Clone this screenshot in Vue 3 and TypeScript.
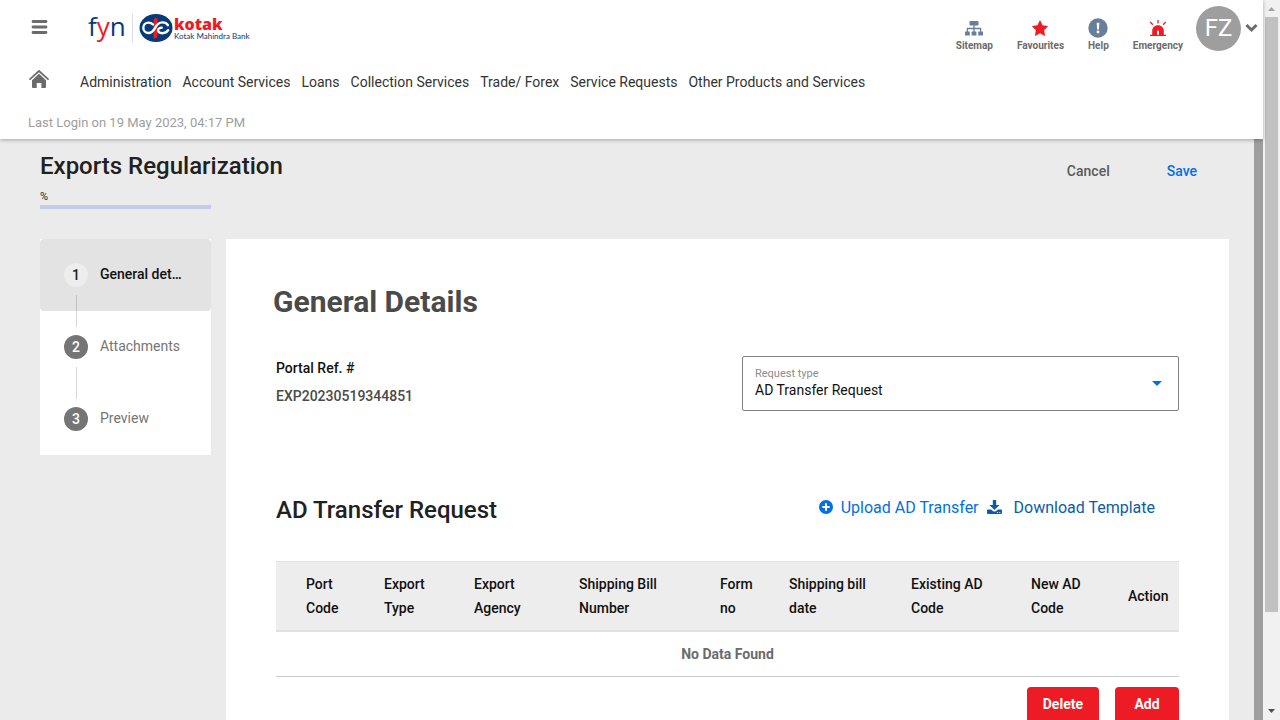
<script setup lang="ts">
import { ref } from 'vue'

interface Step {
  id: number
  label: string
}
interface Column {
  label: string
  width: number
}

const menu: string[] = [
  'Administration',
  'Account Services',
  'Loans',
  'Collection Services',
  'Trade/ Forex',
  'Service Requests',
  'Other Products and Services',
]
const steps: Step[] = [
  { id: 1, label: 'General details' },
  { id: 2, label: 'Attachments' },
  { id: 3, label: 'Preview' },
]
const columns: Column[] = [
  { label: 'Port Code', width: 98 },
  { label: 'Export Type', width: 90 },
  { label: 'Export Agency', width: 105 },
  { label: 'Shipping Bill Number', width: 141 },
  { label: 'Form no', width: 69 },
  { label: 'Shipping bill date', width: 122 },
  { label: 'Existing AD Code', width: 120 },
  { label: 'New AD Code', width: 97 },
  { label: 'Action', width: 61 },
]
const activeStep = ref(1)
const requestType = ref('AD Transfer Request')
</script>

<template>
  <div class="screen">
    <div class="app">
      <header class="header">
        <div class="topbar">
          <button class="plain burger" type="button" aria-label="Menu">
            <svg width="17" height="16" viewBox="0 0 17 16"><path d="M2 2.5h13M2 8h13M2 13.5h13" stroke="#6b6b6b" stroke-width="2.8" stroke-linecap="round" /></svg>
          </button>
          <a class="logo" href="#" aria-label="fyn Kotak Mahindra Bank">
            <span class="fyn">f<span class="red">y</span>n</span>
            <svg width="34" height="28" viewBox="0 0 34 28">
              <ellipse cx="17" cy="14" rx="16.500" ry="14" fill="#073a7a" />
              <path d="M18.500 4h-1.500q-2.500.3-2.500 3.200V24.500h1.500q2.500-.3 2.500-3.200z" fill="#ed1c24" />
              <path d="M14 10.500C12.800 9.200 11.200 8.600 9.500 8.600c-3 0-5.200 2.300-5.200 5.200s2.300 5.200 5.200 5.200c3.300 0 4.900-2.200 6.600-5.200 1.700-3.100 3.700-5.400 7.200-5.400 2.500 0 4.600 1 5.600 2.800M29.200 16.200c-1.100 1.900-3.300 3-5.800 3-2.600 0-4.300-1.100-4.300-2.900 0-1.700 1.500-2.600 3.600-2.500" fill="none" stroke="#fff" stroke-width="2.400" stroke-linecap="round" />
            </svg>
            <span class="wordmark">
              <span class="kotak">kotak</span>
              <span class="bank">Kotak Mahindra Bank</span>
            </span>
          </a>
          <nav class="tools" aria-label="Quick links">
            <a href="#" class="tool">
              <svg width="20" height="20" viewBox="0 0 20 20" fill="#687f99"><rect x="5.500" y="3" width="9" height="4.500" rx=".7" /><rect x="1" y="13.500" width="4.800" height="4" rx=".6" /><rect x="7.600" y="13.500" width="4.800" height="4" rx=".6" /><rect x="14.200" y="13.500" width="4.800" height="4" rx=".6" /><path d="M3.400 14v-3.500h13.200V14M10 7v7" fill="none" stroke="#687f99" stroke-width="1.300" /></svg>
              <span>Sitemap</span>
            </a>
            <a href="#" class="tool">
              <svg width="20" height="20" viewBox="0 0 20 20"><path d="M10 2.500l2.400 5 5.400.8-3.900 3.900.9 5.500-4.800-2.600-4.800 2.600.9-5.500-3.900-3.900 5.400-.8z" fill="#ed1c24" stroke="#ed1c24" stroke-linejoin="round" stroke-width=".5" /></svg>
              <span>Favourites</span>
            </a>
            <a href="#" class="tool">
              <svg width="20" height="20" viewBox="0 0 20 20"><circle cx="10" cy="10" r="9.700" fill="#687f99" /><path d="M8.700 4.800h2.600l-.4 6.800H9.100z" fill="#fff" /><circle cx="10" cy="14" r="1.400" fill="#fff" /></svg>
              <span>Help</span>
            </a>
            <a href="#" class="tool">
              <svg width="20" height="20" viewBox="0 0 20 20"><path d="M2 18v-1.300h2.200V13c0-3.300 2.300-5.800 5.800-5.800s5.800 2.500 5.800 5.800v3.700H18V18zM9 16.700h2v-3.200a1 1 0 0 0-2 0z" fill="#ed1c24" fill-rule="evenodd" /><path d="M10 2v3.500M2.300 4l2.500 2.700M17.700 4l-2.500 2.700" stroke="#ed1c24" stroke-width="1.300" /></svg>
              <span>Emergency</span>
            </a>
          </nav>
          <button class="plain profile" type="button" aria-label="Profile">
            <span class="avatar">FZ</span>
            <svg width="13" height="11" viewBox="0 0 13 11"><path d="M1.500 2l5 5 5-5" fill="none" stroke="#6b6b6b" stroke-width="3" /></svg>
          </button>
        </div>
        <nav class="menubar" aria-label="Main">
          <a href="#" class="home" aria-label="Home">
            <svg width="20" height="20" viewBox="0 0 20 20" fill="#6b6b6b"><path d="M1 10.200l9-8.200 9 8.200" fill="none" stroke="#6b6b6b" stroke-width="1.700" stroke-linecap="round" /><path d="M3 11.200l7-6.400 7 6.400V18q0 1-1 1h-3.600v-5H7.700v5H4q-1 0-1-1z" /></svg>
          </a>
          <a v-for="item in menu" :key="item" href="#">{{ item }}</a>
        </nav>
        <p class="login">Last Login on 19 May 2023, 04:17 PM</p>
      </header>

      <div class="workspace">
        <div class="content">
          <div class="titlebar">
            <div>
              <h1>Exports Regularization</h1>
              <p class="percent">%</p>
              <div class="progress"></div>
            </div>
            <div class="actions">
              <button class="plain cancel" type="button">Cancel</button>
              <button class="plain save" type="button">Save</button>
            </div>
          </div>
          <div class="columns">
            <nav class="steps" aria-label="Steps">
              <button
                v-for="step in steps"
                :key="step.id"
                type="button"
                class="plain step"
                :class="{ active: step.id === activeStep }"
                @click="activeStep = step.id"
              >
                <span class="dot">{{ step.id }}</span>
                <span class="name">{{ step.label }}</span>
              </button>
            </nav>
            <main class="card">
              <h2>General Details</h2>
              <div class="fields">
                <div class="reference">
                  <div class="key">Portal Ref. #</div>
                  <div class="value">EXP20230519344851</div>
                </div>
                <div class="field">
                  <label for="request-type">Request type</label>
                  <select id="request-type" v-model="requestType">
                    <option>AD Transfer Request</option>
                  </select>
                  <svg class="caret" width="10" height="5" viewBox="0 0 10 5"><path d="M0 0h10L5 5z" fill="#0070e8" /></svg>
                </div>
              </div>
              <div class="section">
                <h3>AD Transfer Request</h3>
                <div class="links">
                  <a href="#" class="upload">
                    <svg width="14" height="14" viewBox="0 0 14 14"><circle cx="7" cy="7" r="7" fill="#0070e8" /><path d="M7 3.300v7.400M3.300 7h7.400" stroke="#fff" stroke-width="2" /></svg>
                    <span>Upload AD Transfer</span>
                  </a>
                  <a href="#" class="download">
                    <svg width="15" height="15" viewBox="0 0 15 15" fill="#0b5cab"><path d="M5.800 0h3.400v5h3.300l-5 5-5-5h3.300z" /><path fill-rule="evenodd" d="M1 9.500h3l2 1.600q1.500 1 3 0l2-1.600h3q1 0 1 1V13q0 1-1 1H1q-1 0-1-1v-2.500q0-1 1-1zM10 12v1h1v-1zM12.300 12v1h1v-1z" /></svg>
                    <span>Download Template</span>
                  </a>
                </div>
              </div>
              <table>
                <colgroup>
                  <col v-for="column in columns" :key="column.label" :style="{ width: column.width + 'px' }" />
                </colgroup>
                <thead>
                  <tr>
                    <th v-for="column in columns" :key="column.label" scope="col">{{ column.label }}</th>
                  </tr>
                </thead>
                <tbody>
                  <tr>
                    <td :colspan="columns.length">No Data Found</td>
                  </tr>
                </tbody>
              </table>
              <div class="buttons">
                <button type="button">Delete</button>
                <button type="button">Add</button>
              </div>
            </main>
          </div>
        </div>
        <div class="inner-track"></div>
      </div>
    </div>
    <div class="scrollbar" aria-hidden="true">
      <svg width="17" height="17" viewBox="0 0 17 17"><path d="M5 11h7L8.500 7z" fill="#a3a3a3" /></svg>
      <div class="thumb"></div>
      <div class="rail"></div>
      <svg width="17" height="17" viewBox="0 0 17 17"><path d="M5 6h7l-3.500 4z" fill="#505050" /></svg>
    </div>
  </div>
</template>

<style>
body {
  margin: 0;
}
</style>

<style scoped>
* {
  box-sizing: border-box;
}
h1, h2, h3, p {
  margin: 0;
}
a {
  color: inherit;
  text-decoration: none;
}
svg {
  display: block;
  flex: none;
}
.plain {
  border: 0;
  padding: 0;
  background: none;
  color: inherit;
  font: inherit;
  cursor: pointer;
}
.screen {
  display: flex;
  height: 100vh;
  overflow: hidden;
  font-family: Roboto, "Liberation Sans", sans-serif;
  font-size: 14px;
  line-height: 20px;
  color: #212121;
}
.app {
  flex: 1;
  min-width: 0;
  display: flex;
  flex-direction: column;
}
.header {
  flex: none;
  position: relative;
  background: #fff;
  box-shadow: 0 1px 4px rgba(0, 0, 0, 0.3);
  padding-bottom: 6px;
}
.topbar {
  display: flex;
  align-items: flex-start;
  height: 60px;
  padding: 6px 5px 0 31px;
}
.burger {
  margin-top: 13px;
}
.logo {
  display: flex;
  margin: 8px auto 0 40px;
  color: #073a7a;
}
.fyn {
  width: 45px;
  margin-right: 6px;
  border-right: 1px solid #d9deea;
  font-family: "Open Sans", sans-serif;
  font-size: 26px;
  line-height: 24px;
}
.red {
  color: #ed1c24;
}
.wordmark {
  display: flex;
  flex-direction: column;
  padding-left: 1px;
}
.kotak {
  height: 18px;
  font-family: "Open Sans", sans-serif;
  font-size: 16px;
  line-height: 20px;
  font-weight: 800;
  color: #ed1c24;
}
.bank {
  font-family: Lato, sans-serif;
  font-size: 8px;
  line-height: 8px;
  white-space: nowrap;
}
.tools {
  display: flex;
  gap: 24px;
  padding-top: 12px;
  margin-right: 13px;
}
.tool {
  display: flex;
  flex-direction: column;
  align-items: center;
  font-size: 10px;
  line-height: 16px;
  font-weight: 700;
  color: #6b6b6b;
}
.profile {
  display: flex;
  align-items: center;
  gap: 4px;
}
.avatar {
  width: 45px;
  height: 45px;
  border-radius: 50%;
  background: #9e9e9e;
  color: #fff;
  font-size: 24px;
  line-height: 45px;
  text-align: center;
}
.menubar {
  display: flex;
  align-items: center;
  gap: 11px;
  height: 44px;
  padding-left: 29px;
  color: #333;
}
.home {
  margin: -6px 20px 0 0;
}
.login {
  padding: 9px 28px 0;
  font-size: 13px;
  color: #9e9e9e;
}
.workspace {
  flex: 1;
  min-height: 0;
  display: flex;
  background: #ebebeb;
}
.content {
  flex: 1;
  min-width: 0;
  overflow: hidden;
  padding: 11px 25px 0 40px;
}
.inner-track {
  width: 9px;
  background: #9e9e9e;
}
.titlebar {
  display: flex;
  justify-content: space-between;
  align-items: flex-start;
  height: 89px;
}
h1 {
  font-size: 24px;
  line-height: 32px;
  font-weight: 500;
}
.percent {
  margin-top: 7px;
  font-size: 11px;
  line-height: 16px;
}
.progress {
  width: 171px;
  height: 4px;
  background: #c5cae9;
}
.actions {
  display: flex;
  gap: 57px;
  padding: 11px 32px 0 0;
  font-weight: 500;
}
.cancel {
  color: #5a5a5a;
}
.save {
  color: #0070e8;
}
.columns {
  display: grid;
  grid-template-columns: 171px minmax(0, 1fr);
  gap: 15px;
  align-items: start;
}
.steps {
  background: #fff;
}
.step {
  position: relative;
  display: flex;
  align-items: center;
  gap: 12px;
  width: 100%;
  height: 72px;
  padding: 0 24px;
  color: #757575;
}
.step.active {
  background: #e3e3e3;
  border-radius: 4px;
  color: #111;
  font-weight: 500;
}
.step:not(:last-child)::after {
  content: "";
  position: absolute;
  z-index: 1;
  left: 36px;
  top: 56px;
  height: 32px;
  border-left: 1px solid rgba(0, 0, 0, 0.15);
}
.dot {
  flex: none;
  width: 24px;
  height: 24px;
  border-radius: 50%;
  background: #757575;
  color: #fff;
  font-weight: 500;
  line-height: 24px;
  text-align: center;
}
.active .dot {
  background: #ededed;
  color: #212121;
}
.name {
  min-width: 0;
  padding-bottom: 2px;
  overflow: hidden;
  text-overflow: ellipsis;
  white-space: nowrap;
}
.card {
  background: #fff;
  padding: 43px 50px 24px;
}
h2 {
  margin-left: -3px;
  font-size: 30px;
  line-height: 40px;
  font-weight: 700;
  color: #4a4a4a;
}
.fields {
  display: flex;
  justify-content: space-between;
  margin-top: 34px;
}
.reference {
  padding-top: 2px;
  font-weight: 500;
}
.value {
  margin-top: 8px;
  color: #4a4a4a;
}
.key {
  color: #111;
}
.field {
  position: relative;
  width: 437px;
  height: 55px;
  border: 1px solid #808080;
  border-radius: 2px;
}
.field label {
  position: absolute;
  left: 12px;
  top: 10px;
  font-size: 11px;
  line-height: 13px;
  color: #8c8c8c;
}
.field select {
  width: 100%;
  height: 100%;
  border: 0;
  padding: 12px 12px 0;
  appearance: none;
  background: transparent;
  font: inherit;
  color: #111;
}
.caret {
  position: absolute;
  right: 16px;
  top: 24px;
  pointer-events: none;
}
.section {
  display: flex;
  justify-content: space-between;
  margin-top: 83px;
}
h3 {
  font-size: 24px;
  line-height: 32px;
  font-weight: 500;
}
.links {
  display: flex;
  gap: 8px;
  padding: 4px 24px 0 0;
  font-size: 16px;
  line-height: 20px;
}
.links a {
  display: flex;
  align-items: center;
  height: 20px;
}
.links svg {
  margin-bottom: 2px;
}
.upload {
  gap: 8px;
  color: #0070e8;
}
.download {
  gap: 12px;
  color: #0b5cab;
}
table {
  width: 100%;
  margin-top: 35px;
  table-layout: fixed;
  border-collapse: separate;
  border-spacing: 0;
}
th {
  padding: 10px 20px 10px 10px;
  border-top: 1px solid #dee2e6;
  border-bottom: 2px solid #dee2e6;
  background: #ededed;
  line-height: 24px;
  font-weight: 500;
  text-align: left;
  color: #111;
}
th:first-child {
  padding-left: 30px;
}
th:last-child {
  padding-right: 0;
}
td {
  height: 45px;
  padding: 0;
  border-bottom: 1px solid #ccc;
  color: #6b6b6b;
  font-weight: 700;
  text-align: center;
}
.buttons {
  display: flex;
  justify-content: flex-end;
  gap: 16px;
  padding-top: 10px;
}
.buttons button {
  height: 36px;
  min-width: 64px;
  padding: 0 16px 2px;
  border: 0;
  border-radius: 4px;
  background: #ed1c24;
  color: #fff;
  font: inherit;
  font-weight: 700;
}
.scrollbar {
  width: 17px;
  display: flex;
  flex-direction: column;
  background: #f1f1f1;
}
.rail {
  flex: 2;
}
.thumb {
  flex: 13;
  margin: 0 2px;
  background: #c1c1c1;
}
</style>
